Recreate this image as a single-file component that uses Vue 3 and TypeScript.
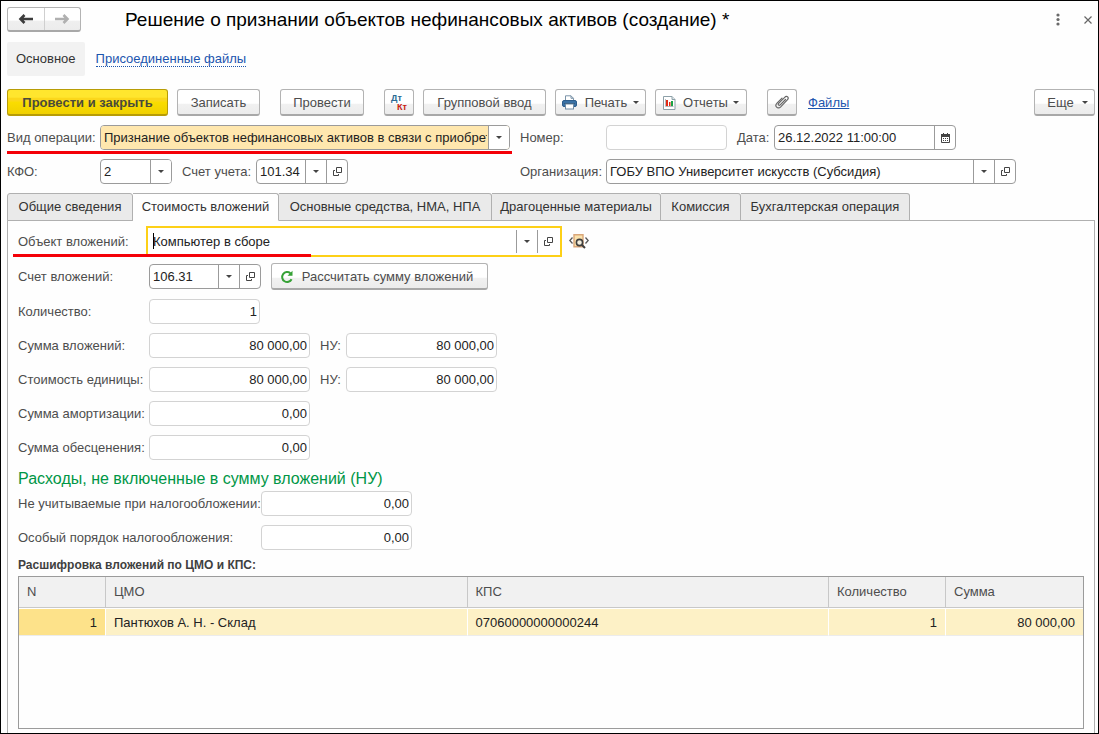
<script setup lang="ts">
import { ref } from 'vue'

interface SumField {
  id: string
  label: string
  value: string
  taxValue?: string
  short?: boolean
}

interface Row {
  n: number
  place: string
  kps: string
  quantity: string
  sum: string
}

const tabs = [
  { title: 'Общие сведения', cls: 't-general' },
  { title: 'Стоимость вложений', cls: 't-cost' },
  { title: 'Основные средства, НМА, НПА', cls: 't-assets' },
  { title: 'Драгоценные материалы', cls: 't-precious' },
  { title: 'Комиссия', cls: 't-commission' },
  { title: 'Бухгалтерская операция', cls: 't-entry' },
]
const activeTab = ref(1)

const operation = ref('Признание объектов нефинансовых активов в связи с приобретением')
const kfo = ref('2')
const account = ref('101.34')
const docNumber = ref('')
const docDate = ref('26.12.2022 11:00:00')
const organization = ref('ГОБУ ВПО Университет искусств (Субсидия)')
const investObject = ref('Компьютер в сборе')
const investAccount = ref('106.31')

const sums = ref<SumField[]>([
  { id: 'quantity', label: 'Количество:', value: '1', short: true },
  { id: 'total', label: 'Сумма вложений:', value: '80 000,00', taxValue: '80 000,00' },
  { id: 'unit', label: 'Стоимость единицы:', value: '80 000,00', taxValue: '80 000,00' },
  { id: 'amort', label: 'Сумма амортизации:', value: '0,00' },
  { id: 'impair', label: 'Сумма обесценения:', value: '0,00' },
])

const expenses = ref<SumField[]>([
  { id: 'untaxed', label: 'Не учитываемые при налогообложении:', value: '0,00' },
  { id: 'special', label: 'Особый порядок налогообложения:', value: '0,00' },
])

const rows: Row[] = [
  { n: 1, place: 'Пантюхов А. Н. - Склад', kps: '07060000000000244', quantity: '1', sum: '80 000,00' },
]
</script>

<template>
  <main class="window">
    <header class="titlebar">
      <div class="history">
        <button type="button" aria-label="Назад">
          <svg width="16" height="12" viewBox="0 0 16 12"><path d="M6.500 2 2.500 6l4 4M2.500 6H15" fill="none" stroke="#3c3c3c" stroke-width="2.600" /></svg>
        </button>
        <button type="button" aria-label="Вперед">
          <svg width="16" height="12" viewBox="0 0 16 12"><path d="M9.500 2l4 4-4 4M13.500 6H1" fill="none" stroke="#b0b0b0" stroke-width="2.600" /></svg>
        </button>
      </div>
      <h1>Решение о признании объектов нефинансовых активов (создание) *</h1>
      <button type="button" class="plain" aria-label="Меню">
        <svg width="4" height="14" viewBox="0 0 4 14" fill="#6a6a6a"><circle cx="2" cy="2" r="1.600" /><circle cx="2" cy="6.500" r="1.600" /><circle cx="2" cy="11" r="1.600" /></svg>
      </button>
      <button type="button" class="plain close" aria-label="Закрыть">
        <svg width="8" height="8" viewBox="0 0 8 8"><path d="M.5.5l7 7M7.500.5l-7 7" stroke="#666" stroke-width="1.200" /></svg>
      </button>
    </header>

    <nav class="sections">
      <span class="current">Основное</span>
      <a href="#files">Присоединенные файлы</a>
    </nav>

    <div class="toolbar">
      <button type="button" class="btn primary">Провести и закрыть</button>
      <button type="button" class="btn save">Записать</button>
      <button type="button" class="btn post">Провести</button>
      <button type="button" class="btn square" aria-label="Дебет и кредит">
        <span class="dtkt"><b class="dt">Дт</b><b class="kt">Кт</b></span>
      </button>
      <button type="button" class="btn group">Групповой ввод</button>
      <button type="button" class="btn print">
        <svg width="15" height="15" viewBox="0 0 15 15">
          <path d="M3.500 6V.8h5.500l2.500 2.500V6" fill="#fff" stroke="#7b93a8" />
          <path d="M9 .8v2.500h2.500" fill="none" stroke="#7b93a8" />
          <rect x=".5" y="5.500" width="14" height="6" rx="1.500" fill="#3b72a5" stroke="#2d5d8c" />
          <path d="M2.500 8.500h10" stroke="#1f4468" />
          <rect x="3.500" y="9" width="8" height="5" fill="#fff" stroke="#6f8ba5" />
        </svg>
        <span>Печать</span><i class="arrow"></i>
      </button>
      <button type="button" class="btn reports">
        <svg width="13" height="14" viewBox="0 0 13 14">
          <path d="M.5.5h8.500l3 3v10H.5z" fill="#fff" stroke="#8da0a8" />
          <path d="M9 .5v3h3" fill="#dfe6e9" stroke="#8da0a8" />
          <path d="M2.500 3v7.500h8" fill="none" stroke="#b4bcc0" />
          <path d="M3 4h2v6H3z" fill="#e22c18" /><path d="M6 6h1.500v4H6z" fill="#e22c18" /><path d="M8 5h2v5H8z" fill="#1ba345" />
        </svg>
        <span>Отчеты</span><i class="arrow"></i>
      </button>
      <button type="button" class="btn square clip" aria-label="Прикрепить файл">
        <svg width="14" height="15" viewBox="0 0 14 15"><path d="M10.500 4.500l-5.300 5.300c-1.200 1.200-2.700-.3-1.500-1.500l6-6c2.200-2.200 4.800.4 2.600 2.600l-6.600 6.900c-3 3-6.600-.7-3.700-3.700L7 3.100" fill="none" stroke="#666" stroke-width="1.200" stroke-linecap="round" /></svg>
      </button>
      <a href="#attachments" class="files">Файлы</a>
      <button type="button" class="btn more"><span>Еще</span><i class="arrow"></i></button>
    </div>

    <div class="props">
      <label for="operation">Вид операции:</label>
      <div class="cell marked">
        <div class="field picker highlighted">
          <select id="operation" v-model="operation">
            <option>Признание объектов нефинансовых активов в связи с приобретением</option>
          </select>
          <span class="drop"><i class="arrow"></i></span>
        </div>
      </div>
      <label for="number">Номер:</label>
      <div class="cell">
        <div class="field light number"><input id="number" v-model="docNumber" type="text" /></div>
        <label for="date" class="date-label">Дата:</label>
        <div class="field date">
          <input id="date" v-model="docDate" type="text" />
          <button type="button" aria-label="Календарь">
            <svg width="9" height="10" viewBox="0 0 9 10"><path d="M.5 1.500h8v8h-8z" fill="#fff" stroke="#444" /><path d="M0 1h9v3H0zM2 0h1v2H2zM6 0h1v2H6z" fill="#444" /><path d="M2 5.500h5.500M2 7.500h5.500" stroke="#444" stroke-dasharray="1 1" /></svg>
          </button>
        </div>
      </div>

      <label for="kfo">КФО:</label>
      <div class="cell">
        <div class="field picker kfo">
          <select id="kfo" v-model="kfo"><option>2</option></select>
          <span class="drop"><i class="arrow"></i></span>
        </div>
        <label for="account" class="account-label">Счет учета:</label>
        <div class="field account">
          <input id="account" v-model="account" type="text" />
          <button type="button" aria-label="Выбрать счет"><i class="arrow"></i></button>
          <button type="button" aria-label="Открыть счет"><svg class="open" viewBox="0 0 9 9"><path d="M3.500.5h5v5h-5zM2 3.500H.5v5h5V7" /></svg></button>
        </div>
      </div>
      <label for="organization">Организация:</label>
      <div class="cell">
        <div class="field organization">
          <input id="organization" v-model="organization" type="text" />
          <button type="button" aria-label="Выбрать организацию"><i class="arrow"></i></button>
          <button type="button" aria-label="Открыть организацию"><svg class="open" viewBox="0 0 9 9"><path d="M3.500.5h5v5h-5zM2 3.500H.5v5h5V7" /></svg></button>
        </div>
      </div>
    </div>

    <div class="tabs" role="tablist">
      <button
        v-for="(tab, i) in tabs"
        :key="tab.title"
        type="button"
        role="tab"
        :class="[tab.cls, { active: i === activeTab }]"
        :aria-selected="i === activeTab"
        @click="activeTab = i"
      >{{ tab.title }}</button>
    </div>

    <section class="panel">
      <div class="object-row">
        <label for="object">Объект вложений:</label>
        <div class="focus-box">
          <span class="caret"></span>
          <input id="object" v-model="investObject" type="text" />
          <button type="button" aria-label="Выбрать объект"><i class="arrow"></i></button>
          <button type="button" aria-label="Открыть объект"><svg class="open" viewBox="0 0 9 9"><path d="M3.500.5h5v5h-5zM2 3.500H.5v5h5V7" /></svg></button>
        </div>
        <button type="button" class="plain lookup" aria-label="Найти объект">
          <svg width="20" height="15" viewBox="0 0 20 15">
            <path d="M5 .8h9v12H5z" fill="#fbe3ad" stroke="#d9a679" stroke-width="1.400" />
            <path d="M3.500 3.500.8 6.500l2.700 3M16.500 3.500l2.700 3-2.700 3" fill="none" stroke="#555" stroke-width="1.300" />
            <circle cx="10.500" cy="8.500" r="3.100" fill="#f3efdf" stroke="#3f3f3f" stroke-width="1.600" />
            <path d="M13 11l3 3" stroke="#3f3f3f" stroke-width="2" />
          </svg>
        </button>
      </div>

      <div class="line account-line">
        <label for="invest-account">Счет вложений:</label>
        <div class="field invest">
          <input id="invest-account" v-model="investAccount" type="text" />
          <button type="button" aria-label="Выбрать счет вложений"><i class="arrow"></i></button>
          <button type="button" aria-label="Открыть счет вложений"><svg class="open" viewBox="0 0 9 9"><path d="M3.500.5h5v5h-5zM2 3.500H.5v5h5V7" /></svg></button>
        </div>
        <button type="button" class="btn calc">
          <svg width="14" height="14" viewBox="0 0 14 14"><path d="M11.600 9.300A5 5 0 1 1 10.400 3.200" fill="none" stroke="#35a135" stroke-width="2" /><path d="M12.500.8v5H7.500z" fill="#35a135" /></svg>
          <span>Рассчитать сумму вложений</span>
        </button>
      </div>

      <div class="lines">
        <div v-for="item in sums" :key="item.id" class="line">
          <label :for="item.id">{{ item.label }}</label>
          <div class="field light amount" :class="{ short: item.short }">
            <input :id="item.id" v-model="item.value" type="text" />
          </div>
          <template v-if="item.taxValue">
            <label :for="item.id + '-tax'" class="tax-label">НУ:</label>
            <div class="field light tax"><input :id="item.id + '-tax'" v-model="item.taxValue" type="text" /></div>
          </template>
        </div>
      </div>

      <h2>Расходы, не включенные в сумму вложений (НУ)</h2>
      <div class="lines wide">
        <div v-for="item in expenses" :key="item.id" class="line">
          <label :for="item.id">{{ item.label }}</label>
          <div class="field light tax"><input :id="item.id" v-model="item.value" type="text" /></div>
        </div>
      </div>

      <h3 id="details">Расшифровка вложений по ЦМО и КПС:</h3>
      <div class="grid">
        <table aria-labelledby="details">
          <colgroup><col class="c-n" /><col /><col /><col class="c-qty" /><col class="c-sum" /></colgroup>
          <thead>
            <tr><th>N</th><th>ЦМО</th><th>КПС</th><th>Количество</th><th>Сумма</th></tr>
          </thead>
          <tbody>
            <tr v-for="row in rows" :key="row.n">
              <td class="num key">{{ row.n }}</td>
              <td>{{ row.place }}</td>
              <td>{{ row.kps }}</td>
              <td class="num">{{ row.quantity }}</td>
              <td class="num">{{ row.sum }}</td>
            </tr>
          </tbody>
        </table>
      </div>
    </section>
  </main>
</template>

<style>
body {
  margin: 0;
}
</style>

<style scoped>
* {
  box-sizing: border-box;
}
.window {
  display: flex;
  flex-direction: column;
  min-height: 100vh;
  padding: 6px 3px 0 6px;
  border: 1px solid #000;
  background: #fefefe;
  color: #4d4d4d;
  font: 13px/16px "Liberation Sans", Arial, sans-serif;
}
button,
input,
select {
  margin: 0;
  padding: 0;
  border: 0;
  border-radius: 0;
  outline: 0;
  background: none;
  color: inherit;
  font: inherit;
}
svg {
  display: block;
  flex: none;
}
label {
  white-space: nowrap;
}
.titlebar {
  display: flex;
  align-items: center;
  height: 25px;
}
.history {
  display: flex;
  width: 74px;
  height: 25px;
  border: 1px solid #b3b3b3;
  border-bottom: 2px solid #a8a8a8;
  border-radius: 3px;
  background: linear-gradient(#fff 55%, #efefef 60%, #ececec);
}
.history button {
  display: flex;
  flex: 1;
  align-items: center;
  justify-content: center;
}
.history button + button {
  border-left: 1px solid #cfcfcf;
}
h1 {
  flex: 1;
  margin: 0 0 0 44px;
  color: #000;
  font-size: 19px;
  font-weight: normal;
  line-height: 24px;
  white-space: nowrap;
}
.plain {
  flex: none;
}
.close {
  margin: 0 3px 0 24px;
}
.sections {
  display: flex;
  align-items: center;
  gap: 11px;
  margin-top: 10px;
}
.current {
  padding: 9px;
  border-radius: 2px;
  background: #f2f2f2;
  color: #333;
}
.sections a {
  border-bottom: 1px dotted #1c55ae;
  color: #1c55ae;
  line-height: 15px;
  text-decoration: none;
}
.toolbar {
  display: flex;
  align-items: center;
  gap: 9px;
  margin-top: 13px;
}
.btn {
  display: flex;
  flex: none;
  align-items: center;
  justify-content: center;
  height: 27px;
  padding-top: 1px;
  border: 1px solid #b3b3b3;
  border-bottom: 2px solid #a8a8a8;
  border-radius: 3px;
  background: linear-gradient(#fff 55%, #f1f1f1 60%, #ececec);
  color: #4d4d4d;
  white-space: nowrap;
}
.primary {
  width: 161px;
  border-color: #b79c06;
  background: linear-gradient(#ffe62e 30%, #fbd71b 34%, #fbd71b 46%, #fadd00 50%, #f0d000);
  color: #4a4a3c;
  font-weight: bold;
}
.save {
  width: 83px;
}
.post {
  width: 84px;
  margin: 0 11px;
}
.square {
  width: 30px;
}
.group {
  width: 123px;
}
.print {
  gap: 8px;
  width: 91px;
}
.reports {
  gap: 7px;
  width: 92px;
}
.clip {
  margin-left: 11px;
}
.more {
  gap: 8px;
  width: 61px;
  margin-left: auto;
  padding-left: 6px;
}
.files {
  margin-left: 2px;
  color: #1c55ae;
}
.dtkt {
  display: flex;
  flex-direction: column;
  width: 16px;
  font-size: 9px;
  line-height: 9px;
}
.dt {
  color: #2a6a93;
  text-align: left;
}
.kt {
  color: #c8200f;
  text-align: right;
}
.arrow {
  flex: none;
  width: 0;
  height: 0;
  border: 3px solid transparent;
  border-top-color: #444;
  border-bottom: 0;
}
.print .arrow,
.reports .arrow {
  margin-left: -2px;
}
.props {
  display: grid;
  grid-template-columns: 93px 410px 96px 410px;
  row-gap: 9px;
  align-items: center;
  margin-top: 9px;
}
.props > label:nth-of-type(even) {
  padding-left: 10px;
}
.cell {
  display: flex;
  align-items: center;
}
.marked {
  position: relative;
}
.marked::after {
  position: absolute;
  right: -2px;
  bottom: -4px;
  left: -93px;
  height: 3px;
  background: #f40008;
  content: "";
}
.field {
  display: flex;
  flex: none;
  height: 25px;
  overflow: hidden;
  border: 1px solid #9b9b9b;
  border-radius: 4px;
  background: #fff;
  color: #222;
}
.field.light {
  border-color: #d3d3d3;
}
.field input,
.focus-box input {
  flex: 1;
  width: 0;
  min-width: 0;
  padding: 0 3px;
}
.field button {
  display: flex;
  flex: none;
  align-items: center;
  justify-content: center;
  width: 21px;
  border-left: 1px solid #9b9b9b;
}
.picker {
  display: grid;
  width: 410px;
}
.picker select,
.drop {
  grid-area: 1 / 1;
}
.picker select {
  width: 100%;
  min-width: 0;
  padding: 0 22px 0 3px;
  appearance: none;
}
.highlighted select {
  background: #ffe7ae;
}
.drop {
  display: flex;
  align-items: center;
  justify-content: center;
  justify-self: end;
  width: 21px;
  border-left: 1px solid #9b9b9b;
  background: #fff;
  pointer-events: none;
}
.number {
  width: 121px;
}
.date-label {
  width: 47px;
  padding-left: 10px;
}
.date {
  width: 182px;
}
.kfo {
  width: 72px;
}
.account-label {
  width: 84px;
  padding-left: 10px;
}
.account {
  width: 92px;
}
.organization {
  width: 410px;
}
.open {
  width: 9px;
  height: 9px;
  fill: none;
  stroke: #444;
}
.tabs {
  display: flex;
  height: 28px;
  margin-top: 9px;
  border-bottom: 1px solid #b0b0b0;
}
.tabs button {
  flex: none;
  height: 28px;
  border: 1px solid #b0b0b0;
  border-left: 0;
  border-radius: 0 3px 0 0;
  background: #eaeaea;
  color: #333;
  white-space: nowrap;
}
.tabs button:first-child {
  border-left: 1px solid #b0b0b0;
  border-radius: 3px 3px 0 0;
}
.tabs .active {
  border-bottom-color: #fefefe;
  background: #fefefe;
}
.t-general {
  width: 126px;
}
.t-cost {
  width: 146px;
}
.t-assets {
  width: 213px;
}
.t-precious {
  width: 169px;
}
.t-commission {
  width: 80px;
}
.t-entry {
  width: 169px;
}
.panel {
  display: flex;
  flex: 1;
  flex-direction: column;
  padding: 5px 10px 4px;
  border: 1px solid #b0b0b0;
  border-width: 0 1px;
}
.object-row {
  display: flex;
  position: relative;
  align-items: center;
}
.object-row::after {
  position: absolute;
  bottom: 0;
  left: -5px;
  width: 298px;
  height: 3px;
  background: #f40008;
  content: "";
}
.object-row label {
  width: 128px;
}
.focus-box {
  display: flex;
  position: relative;
  align-items: center;
  width: 416px;
  height: 31px;
  padding-right: 2px;
  border: 2px solid #fdd017;
  background: #fff;
  color: #222;
}
.focus-box input {
  padding-left: 5px;
}
.focus-box button {
  display: flex;
  align-items: center;
  justify-content: center;
  width: 21px;
  height: 23px;
  border-left: 1px solid #9b9b9b;
}
.caret {
  position: absolute;
  top: 5px;
  left: 5px;
  width: 1px;
  height: 16px;
  background: #000;
}
.lookup {
  margin-left: 7px;
}
.line {
  display: flex;
  align-items: center;
}
.line > label:first-child {
  width: 131px;
}
.account-line {
  margin-top: 6px;
}
.invest {
  width: 112px;
}
.calc {
  gap: 8px;
  width: 217px;
  margin-left: 10px;
  padding-right: 6px;
}
.lines {
  display: flex;
  flex-direction: column;
  gap: 9px;
  margin-top: 9px;
}
.light input {
  text-align: right;
}
.light.amount input,
.light.tax input {
  padding: 0 2px;
}
.amount {
  width: 161px;
}
.amount.short {
  width: 111px;
}
.tax-label {
  width: 36px;
  padding-left: 10px;
}
.tax {
  width: 151px;
}
h2 {
  margin: 9px 0 0;
  color: #009646;
  font-size: 16px;
  font-weight: normal;
  line-height: 20px;
}
.lines.wide {
  margin-top: 2px;
}
.wide .line > label:first-child {
  width: 243px;
}
h3 {
  margin: 8px 0 3px;
  color: #404040;
  font-size: 12px;
  font-weight: bold;
  line-height: 15px;
}
.grid {
  flex: 1;
  min-height: 90px;
  border: 1px solid #9b9b9b;
  background: #fefefe;
}
table {
  width: 100%;
  border-spacing: 0;
  table-layout: fixed;
}
.c-n {
  width: 87px;
}
.c-qty {
  width: 117px;
}
.c-sum {
  width: 137px;
}
th {
  height: 31px;
  padding: 0 8px;
  border-right: 1px solid #c8c8c8;
  border-bottom: 1px solid #c8c8c8;
  background: #f1f1f1;
  font-weight: normal;
  text-align: left;
}
td {
  height: 28px;
  padding: 1px 8px 0;
  border-top: 1px solid #fff;
  border-right: 1px solid #fff;
  border-bottom: 1px solid #ececec;
  background: #fdf1c6;
  color: #222;
}
th:last-child,
td:last-child {
  border-right: 0;
}
td.key {
  background: #fde28a;
}
.num {
  text-align: right;
}
</style>
